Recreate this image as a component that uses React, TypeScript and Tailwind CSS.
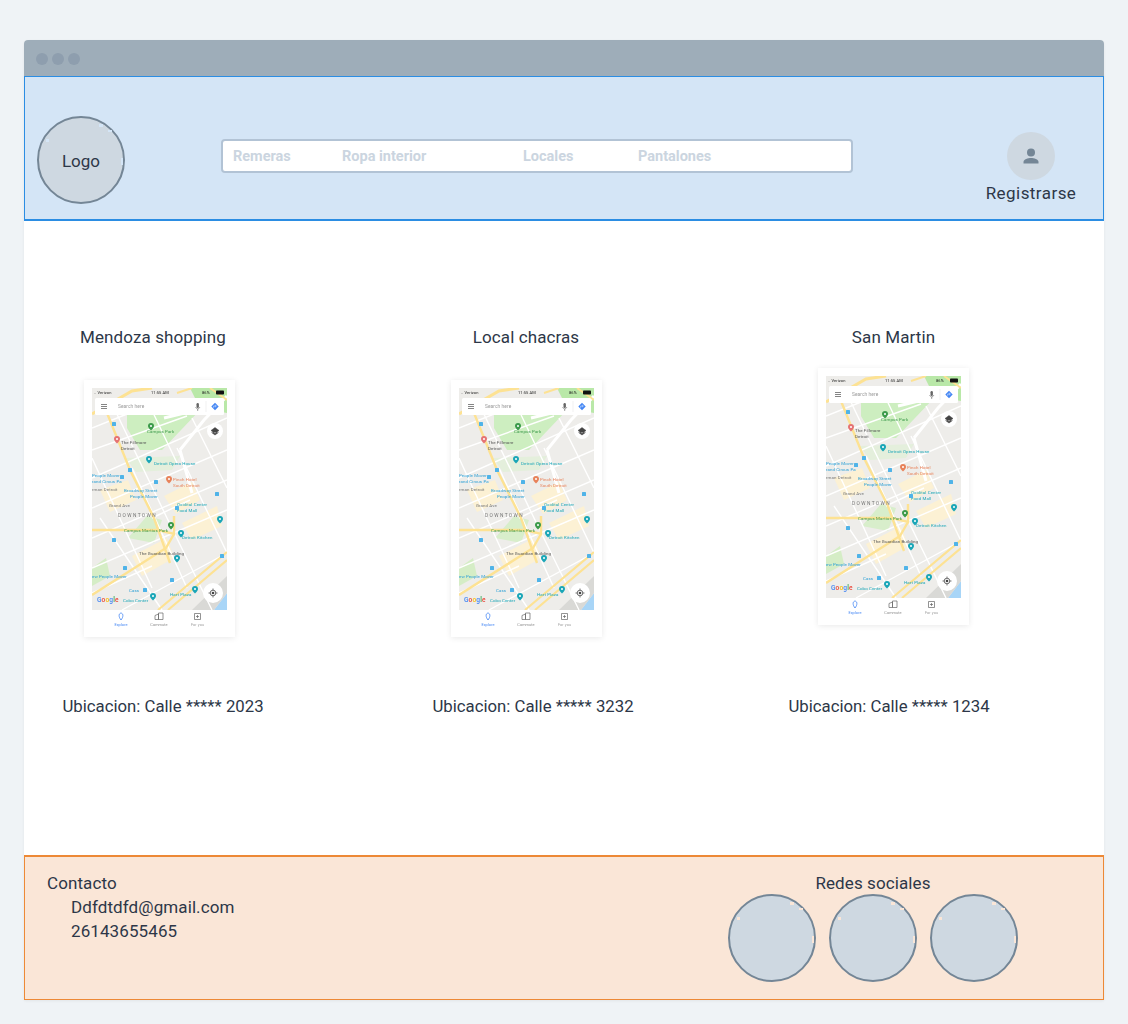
import React from "react";

const font = "font-['Roboto',sans-serif]";

function Pin({ x, y, color }: { x: number; y: number; color: string }) {
  return (
    <g transform={`translate(${x} ${y})`}>
      <path d="M0 3.6 C-2.4 1 -3 0 -3 -1 A3 3 0 0 1 3 -1 C3 0 2.4 1 0 3.6 Z" fill={color} />
      <circle cy="-1" r="1" fill="#ffffff" />
    </g>
  );
}

function MapPicture() {
  const thinRoads = [
    "M0 40 L70 12 M0 62 L95 28 M0 90 L135 30 M0 120 L135 62 M0 150 L135 92 M0 180 L135 122 M30 222 L135 165",
    "M22 20 L75 130 L120 222 M55 12 L85 75 M0 70 L60 200 M85 60 L135 165 M100 30 L135 100 M40 80 L95 200",
    "M0 205 L60 178 M60 130 L98 112 M8 130 L70 222",
  ];
  return (
    <svg width="135" height="242" viewBox="0 0 135 242" className={`block blur-[0.3px] ${font}`}>
      <rect width="135" height="222" fill="#eeedea" />
      {/* parks */}
      <path d="M35 12 L98 12 L108 22 L70 62 L48 62 L35 40 Z" fill="#cdeec0" />
      <path d="M98 0 L135 0 L135 25 L108 20 Z" fill="#b9e8a8" />
      <path d="M34 70 L88 68 L80 82 L44 84 Z" fill="#e4efdc" />
      <path d="M36 150 L55 128 L70 132 L62 155 Z" fill="#d8eecb" />
      <path d="M0 180 L14 170 L18 188 L0 198 Z" fill="#d5edc6" />
      <path d="M72 108 L100 94 L108 112 L84 126 Z" fill="#fcf1d4" />
      <path d="M8 102 L36 92 L44 112 L18 124 Z" fill="#fcf1d4" />
      <path d="M90 135 L125 118 L130 138 L100 152 Z" fill="#fcf1d4" />
      <path d="M40 168 L75 150 L82 170 L50 188 Z" fill="#fcf1d4" />
      <path d="M122 222 L135 205 L135 222 Z" fill="#a8d5f7" />
      <path d="M100 222 L135 188 L135 205 L122 222 Z" fill="#d9d9d6" />
      {/* streets */}
      {thinRoads.map((d) => (
        <path key={d} d={d} fill="none" stroke="#ffffff" strokeWidth="1.4" />
      ))}
      <path d="M88 62 L112 32 L135 8 M88 62 L100 105 M72 30 L105 22" fill="none" stroke="#ffffff" strokeWidth="3" />
      {/* main roads */}
      <path d="M0 26 L40 3 L60 0" fill="none" stroke="#fde293" strokeWidth="3" />
      <path d="M15 25 L38 82 L62 130 L78 175" fill="none" stroke="#fde293" strokeWidth="2.4" />
      <path d="M0 142 L66 142 L82 146 L82 128 M82 146 L74 160 L0 207" fill="none" stroke="#fde293" strokeWidth="2.4" />
      <path d="M66 222 L135 164 M76 222 L135 172" fill="none" stroke="#fde293" strokeWidth="2.2" />
      <path d="M100 0 L85 5 M135 12 L118 0" fill="none" stroke="#fde293" strokeWidth="2" />
      {/* labels */}
      <g fontSize="4.4">
        <text x="55" y="45" fill="#3b9a4a">Campus Park</text>
        <text x="29" y="56" fill="#555555">The Fillmore</text>
        <text x="29" y="62" fill="#555555">Detroit</text>
        <text x="62" y="77" fill="#1aa6b7">Detroit Opera House</text>
        <text x="0" y="89" fill="#2a9fd6">People Mover</text>
        <text x="0" y="95" fill="#2a9fd6">rand Circus Pa</text>
        <text x="0" y="103" fill="#777777">rman Detroit</text>
        <text x="32" y="104" fill="#2a9fd6">Broadway Street</text>
        <text x="38" y="110" fill="#2a9fd6">People Mover</text>
        <text x="81" y="93" fill="#e8825a">Pinch Hotel</text>
        <text x="81" y="99" fill="#e8825a">South Detroit</text>
        <text x="85" y="118" fill="#1aa6b7">Oxidital Center</text>
        <text x="85" y="124" fill="#1aa6b7">Food Mall</text>
        <text x="17" y="119" fill="#777777">Grand Ave</text>
        <text x="26" y="129" fill="#777777" fontSize="4.8" letterSpacing="1.4">DOWNTOWN</text>
        <text x="32" y="144" fill="#3b9a4a">Campus Martius Park</text>
        <text x="90" y="151" fill="#1aa6b7">Detroit Kitchen</text>
        <text x="47" y="167" fill="#555555">The Guardian Building</text>
        <text x="0" y="190" fill="#2a9fd6">ew People Mover</text>
        <text x="37" y="204" fill="#2a9fd6">Cass</text>
        <text x="78" y="208" fill="#1aa6b7">Hart Plaza</text>
        <text x="31" y="214" fill="#1aa6b7">Cobo Center</text>
      </g>
      {/* pins */}
      <Pin x={59} y={39} color="#3b9a4a" />
      <Pin x={25} y={52} color="#e57373" />
      <Pin x={57} y={72} color="#1aa6b7" />
      <Pin x={77} y={92} color="#e8825a" />
      <Pin x={79} y={138} color="#3b9a4a" />
      <Pin x={89} y={146} color="#1aa6b7" />
      <Pin x={128} y={132} color="#1aa6b7" />
      <Pin x={85} y={171} color="#1aa6b7" />
      <Pin x={103} y={202} color="#1aa6b7" />
      <Pin x={61} y={209} color="#1aa6b7" />
      {[
        [20, 34],
        [36, 80],
        [28, 87],
        [62, 92],
        [123, 104],
        [20, 150],
        [31, 178],
        [128, 166],
        [78, 190],
        [51, 200],
        [83, 118],
      ].map(([x, y]) => (
        <rect key={`${x}-${y}`} x={x} y={y} width="4" height="4" rx="0.6" fill="#4fb3e8" />
      ))}
      {/* status bar */}
      <g fontSize="4" fill="#222222">
        <text x="2" y="6">.. Verizon</text>
        <text x="59" y="6">11:55 AM</text>
        <text x="110" y="6">86%</text>
      </g>
      <rect x="124" y="2.5" width="8" height="4" rx="0.8" fill="#111111" />
      {/* search box */}
      <rect x="3" y="10" width="129" height="17" rx="1.5" fill="#ffffff" />
      <path d="M9 16.5 H15 M9 18.5 H15 M9 20.5 H15" stroke="#777777" strokeWidth="0.9" />
      <text x="26" y="20" fontSize="4.8" fill="#999999">Search here</text>
      <rect x="104.5" y="15" width="2.4" height="5" rx="1.2" fill="#666666" />
      <path d="M103.5 19 Q105.7 23 108 19 M105.7 21 V23" fill="none" stroke="#666666" strokeWidth="0.6" />
      <path d="M114 13 V24" stroke="#e2e2e2" strokeWidth="0.5" />
      <path d="M123 14.8 L126.7 18.5 L123 22.2 L119.3 18.5 Z" fill="#4285f4" />
      <path d="M121.7 19.8 V18 H124 M123.2 17 L124.4 18 L123.2 19" fill="none" stroke="#ffffff" strokeWidth="0.5" />
      {/* layers button */}
      <circle cx="123" cy="43" r="8" fill="#ffffff" />
      <path d="M123 39.5 L127 42.5 L123 45.5 L119 42.5 Z M119.5 44.5 L123 47 L126.5 44.5" fill="#444444" stroke="#444444" strokeWidth="0.5" />
      {/* locate button */}
      <circle cx="121" cy="205" r="10" fill="#ffffff" />
      <circle cx="121" cy="205" r="2.8" fill="none" stroke="#444444" strokeWidth="0.8" />
      <circle cx="121" cy="205" r="1.3" fill="#444444" />
      <path d="M121 200.5 V202 M121 208 V209.5 M116.5 205 H118 M124 205 H125.5" stroke="#444444" strokeWidth="0.7" />
      {/* google logo */}
      <text x="5" y="214" fontSize="6.6" fontWeight="500">
        <tspan fill="#4285f4">G</tspan>
        <tspan fill="#ea4335">o</tspan>
        <tspan fill="#fbbc05">o</tspan>
        <tspan fill="#4285f4">g</tspan>
        <tspan fill="#34a853">l</tspan>
        <tspan fill="#ea4335">e</tspan>
      </text>
      {/* bottom tabs */}
      <rect y="222" width="135" height="20" fill="#ffffff" />
      <path d="M29 232 C26.5 229 26.5 225.5 29 225 C31.5 225.5 31.5 229 29 232 Z" fill="none" stroke="#4285f4" strokeWidth="0.8" />
      <text x="29" y="237.5" fontSize="3.8" fill="#4285f4" textAnchor="middle">Explore</text>
      <path d="M63 231.5 V227.5 L66.5 226 V231.5 Z M66.5 231.5 V225 H71 V231.5 Z" fill="none" stroke="#666666" strokeWidth="0.7" />
      <text x="67" y="237.5" fontSize="3.8" fill="#8a8a8a" textAnchor="middle">Commute</text>
      <path d="M102.5 225.5 H108.5 V231.5 H102.5 Z M105.5 227 V230 M104 228.5 H107" fill="none" stroke="#666666" strokeWidth="0.7" />
      <text x="105.5" y="237.5" fontSize="3.8" fill="#a0a0a0" textAnchor="middle">For you</text>
    </svg>
  );
}

function MapCard({ raised }: { raised?: boolean }) {
  return (
    <div
      className={`w-[151px] h-[257px] bg-white pt-2 px-2 shadow-[0_1px_6px_rgba(0,0,0,0.09)] ${
        raised ? "mt-[19px]" : "mt-[31px]"
      }`}
    >
      <MapPicture />
    </div>
  );
}

// speck: colour class of the small nicks on the rim, same as the panel behind
function Circle({ speck, children }: { speck: string; children?: React.ReactNode }) {
  return (
    <div className="relative w-[88px] h-[88px] shrink-0 rounded-full bg-[#ced8e1] border-2 border-[#748696] flex items-center justify-center">
      <span className={`absolute left-[60px] top-[6px] w-1 h-[3px] ${speck}`} />
      <span className={`absolute left-[69px] top-3 w-1 h-[2px] ${speck}`} />
      <span className={`absolute left-[7px] top-[21px] w-[3px] h-[3px] ${speck}`} />
      <span className={`absolute left-[82px] top-10 w-[2px] h-[7px] ${speck}`} />
      {children}
    </div>
  );
}

export default function App() {
  return (
    <div className={`min-h-[1024px] bg-[#eff3f6] pt-10 px-6 text-[#2d3748] text-base leading-6 ${font}`}>
      <div className="w-[1080px] h-[960px] flex flex-col bg-white rounded-t shadow-[0_1px_3px_rgba(0,0,0,0.06)]">
        <div className="h-9 shrink-0 bg-[#9eadb9] rounded-t flex items-center gap-1 pl-3 pt-[1px]">
          <span className="w-3 h-3 rounded-full bg-[#8e9eae]" />
          <span className="w-3 h-3 rounded-full bg-[#8e9eae]" />
          <span className="w-3 h-3 rounded-full bg-[#8e9eae]" />
        </div>

        <header className="h-[145px] shrink-0 bg-[#d4e5f6] border border-b-2 border-[#2b8de3] flex items-start pl-3">
          <div className="mt-[39px]">
            <Circle speck="bg-[#d4e5f6]">
              <span className="text-[#2d3748] mt-[2px] text-[17px]">Logo</span>
            </Circle>
          </div>
          <div className="ml-24 mt-[62px] w-[632px] h-[34px] bg-white border-2 border-[#b2c3d5] rounded-sm flex items-center font-bold text-[14.5px] text-[#cbd5e0] pt-[2px]">
            <span className="ml-[10px] w-[109px]">Remeras</span>
            <span className="w-[181px]">Ropa interior</span>
            <span className="w-[115px]">Locales</span>
            <span>Pantalones</span>
          </div>
          <div className="ml-[128px] mt-[55px] w-[100px] flex flex-col items-center">
            <div className="w-12 h-12 rounded-full bg-[#ced8e1] flex items-center justify-center">
              <svg width="24" height="24" viewBox="0 0 24 24" fill="#748696">
                <circle cx="12" cy="8.5" r="4" />
                <path d="M4.5 19.5 V18 C4.5 15.2 9 14 12 14 C15 14 19.5 15.2 19.5 18 V19.5 Z" />
              </svg>
            </div>
            <span className="mt-[1px] text-[17px] tracking-[0.45px] whitespace-nowrap">Registrarse</span>
          </div>
        </header>

        <main className="flex-1 grid grid-cols-[271px_463px_271px] content-start pt-[104px] text-[17px] tracking-[0.1px]">
          <div className="flex flex-col items-center">
            <span className="mr-[13px]">Mendoza shopping</span>
            <MapCard />
            <span className="mt-[57px] ml-[7px] text-[16.75px] tracking-normal">Ubicacion: Calle ***** 2023</span>
          </div>
          <div className="flex flex-col items-center">
            <span className="mr-[1px]">Local chacras</span>
            <MapCard />
            <span className="mt-[57px] ml-[13px] text-[16.75px] tracking-normal">Ubicacion: Calle ***** 3232</span>
          </div>
          <div className="flex flex-col items-center">
            <span>San Martin</span>
            <MapCard raised />
            <span className="mt-[69px] mr-[9px] text-[16.75px] tracking-normal">Ubicacion: Calle ***** 1234</span>
          </div>
        </main>

        <footer className="h-[145px] shrink-0 bg-[#fae6d7] border border-t-2 border-[#ed8936] flex text-[17px] tracking-[0.1px]">
          <div className="ml-[22px] mt-[14px] w-[680px]">
            <p>Contacto</p>
            <p className="ml-6">Ddfdtdfd@gmail.com</p>
            <p className="ml-6">26143655465</p>
          </div>
          <div className="mt-[14px] ml-[1px] flex flex-col items-center">
            <span className="h-[23px]">Redes sociales</span>
            <div className="flex gap-[13px]">
              <Circle speck="bg-[#fae6d7]" />
              <Circle speck="bg-[#fae6d7]" />
              <Circle speck="bg-[#fae6d7]" />
            </div>
          </div>
        </footer>
      </div>
    </div>
  );
}
